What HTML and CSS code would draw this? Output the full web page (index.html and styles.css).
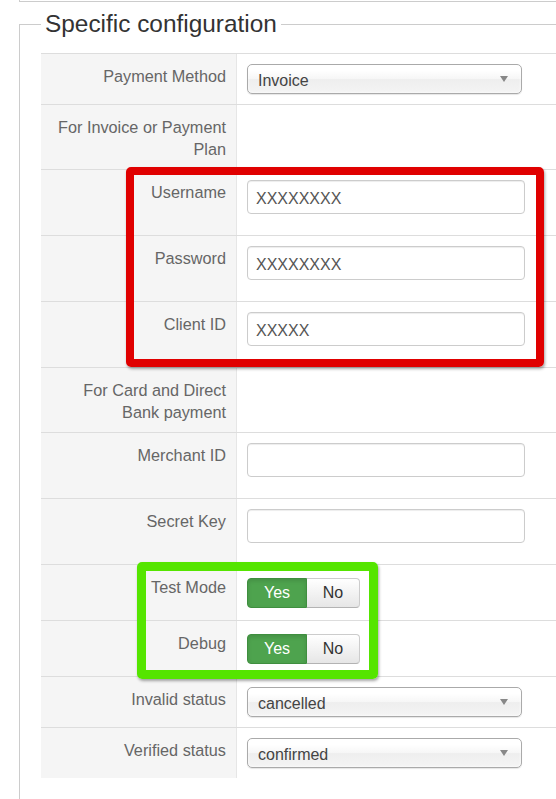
FILE: index.html
```html
<!DOCTYPE html>
<html lang="en">
<head>
<meta charset="utf-8">
<title>Specific configuration</title>
<link rel="stylesheet" href="styles.css">
</head>
<body>
<div class="prev"></div>
<fieldset class="config">
  <legend>Specific configuration</legend>
  <div class="form">
    <div class="row">
      <div class="label">Payment Method</div>
      <div class="value">
        <div class="select"><span>Invoice</span><svg class="arrow" width="8" height="6" viewBox="0 0 8 6"><path d="M0 0H8L4 6Z" fill="#888"/></svg></div>
      </div>
    </div>
    <div class="row">
      <div class="label">For Invoice or Payment Plan</div>
      <div class="value"></div>
    </div>
    <div class="row">
      <div class="label">Username</div>
      <div class="value"><input class="input" type="text" value="XXXXXXXX"></div>
    </div>
    <div class="row">
      <div class="label">Password</div>
      <div class="value"><input class="input" type="text" value="XXXXXXXX"></div>
    </div>
    <div class="row">
      <div class="label">Client ID</div>
      <div class="value"><input class="input" type="text" value="XXXXX"></div>
    </div>
    <div class="row">
      <div class="label">For Card and Direct Bank payment</div>
      <div class="value"></div>
    </div>
    <div class="row">
      <div class="label">Merchant ID</div>
      <div class="value"><input class="input" type="text" value=""></div>
    </div>
    <div class="row">
      <div class="label">Secret Key</div>
      <div class="value"><input class="input" type="text" value=""></div>
    </div>
    <div class="row">
      <div class="label">Test Mode</div>
      <div class="value">
        <div class="toggle"><span class="btn yes">Yes</span><span class="btn no">No</span></div>
      </div>
    </div>
    <div class="row">
      <div class="label">Debug</div>
      <div class="value">
        <div class="toggle"><span class="btn yes">Yes</span><span class="btn no">No</span></div>
      </div>
    </div>
    <div class="row">
      <div class="label">Invalid status</div>
      <div class="value">
        <div class="select"><span>cancelled</span><svg class="arrow" width="8" height="6" viewBox="0 0 8 6"><path d="M0 0H8L4 6Z" fill="#888"/></svg></div>
      </div>
    </div>
    <div class="row">
      <div class="label">Verified status</div>
      <div class="value">
        <div class="select"><span>confirmed</span><svg class="arrow" width="8" height="6" viewBox="0 0 8 6"><path d="M0 0H8L4 6Z" fill="#888"/></svg></div>
      </div>
    </div>
  </div>
</fieldset>
<div class="mark mark-red"></div>
<div class="mark mark-green"></div>
</body>
</html>
```
FILE: styles.css
```css
html, body {
  margin: 0;
  padding: 0;
}
body {
  position: relative;
  overflow: hidden;
  background: #fff;
  font-family: "Liberation Sans", Arial, Helvetica, sans-serif;
  font-size: 16px;
  color: #333;
}
.prev {
  margin-left: 19px;
  height: 1px;
  border-left: 1px solid #ccc;
  border-bottom: 1px solid #ccc;
}
.config {
  box-sizing: border-box;
  margin: 8px 0 0 19px;
  padding: 15px 0 40px 21px;
  border: 1px solid #ccc;
  border-right: none;
  border-bottom: none;
  min-width: 0;
  width: 537px;
}
.config legend {
  font-size: 24.4px;
  line-height: 28px;
  padding: 0 4px;
  color: #333;
}
.form {
  width: 100%;
}
.row {
  display: flex;
  border-top: 1px solid #ddd;
}
.label {
  flex: none;
  width: 175px;
  padding: 11px 10px 9px;
  background: #f5f5f5;
  border-right: 1px solid #e6e6e6;
  text-align: right;
  color: #666;
  font-size: 16.25px;
  line-height: 22px;
}
.value {
  flex: 1;
  min-width: 0;
  padding: 10px 10px;
}
.select {
  display: flex;
  justify-content: space-between;
  align-items: flex-start;
  box-sizing: border-box;
  width: 275px;
  height: 30px;
  padding: 3px 0 0 10px;
  border: 1px solid #aaa;
  border-radius: 5px;
  background: linear-gradient(#fff 20%, #f6f6f6 50%, #eee 52%, #f4f4f4 100%);
  box-shadow: inset 0 0 3px #fff, 0 1px 1px rgba(0, 0, 0, 0.1);
  line-height: 25px;
  color: #444;
}
.arrow {
  margin: 8px 13px 0 0;
}
.input {
  display: block;
  box-sizing: border-box;
  width: 278px;
  height: 34px;
  margin: 0 0 11px;
  padding: 4px 8px 0;
  border: 1px solid #ccc;
  border-radius: 4px;
  background: #fff;
  box-shadow: inset 0 1px 1px rgba(0, 0, 0, 0.075);
  font: 16px/28px "Liberation Sans", Arial, sans-serif;
  color: #555;
  outline: none;
}
.toggle {
  display: flex;
  margin: 3px 0 2px;
}
.btn {
  display: block;
  box-sizing: border-box;
  height: 30px;
  border: 1px solid;
  line-height: 28px;
  text-align: center;
}
.yes {
  width: 60px;
  background: #4ea34e;
  border-color: #3f8f3f;
  border-radius: 4px 0 0 4px;
  color: #fff;
  box-shadow: inset 0 2px 4px rgba(0, 0, 0, 0.12);
}
.no {
  width: 53px;
  border-color: #ccc #ccc #b3b3b3;
  border-left: none;
  border-radius: 0 4px 4px 0;
  background: linear-gradient(#fff, #e6e6e6);
  color: #333;
}
.mark {
  position: absolute;
  box-sizing: border-box;
  border-radius: 5px;
  box-shadow: 1px 2px 3px rgba(0, 0, 0, 0.35);
}
.mark-red {
  left: 126px;
  top: 167px;
  width: 418px;
  height: 200px;
  border: 8px solid #e00000;
}
.mark-green {
  left: 137px;
  top: 562px;
  width: 241px;
  height: 117px;
  border: 9px solid #55e500;
}
```
